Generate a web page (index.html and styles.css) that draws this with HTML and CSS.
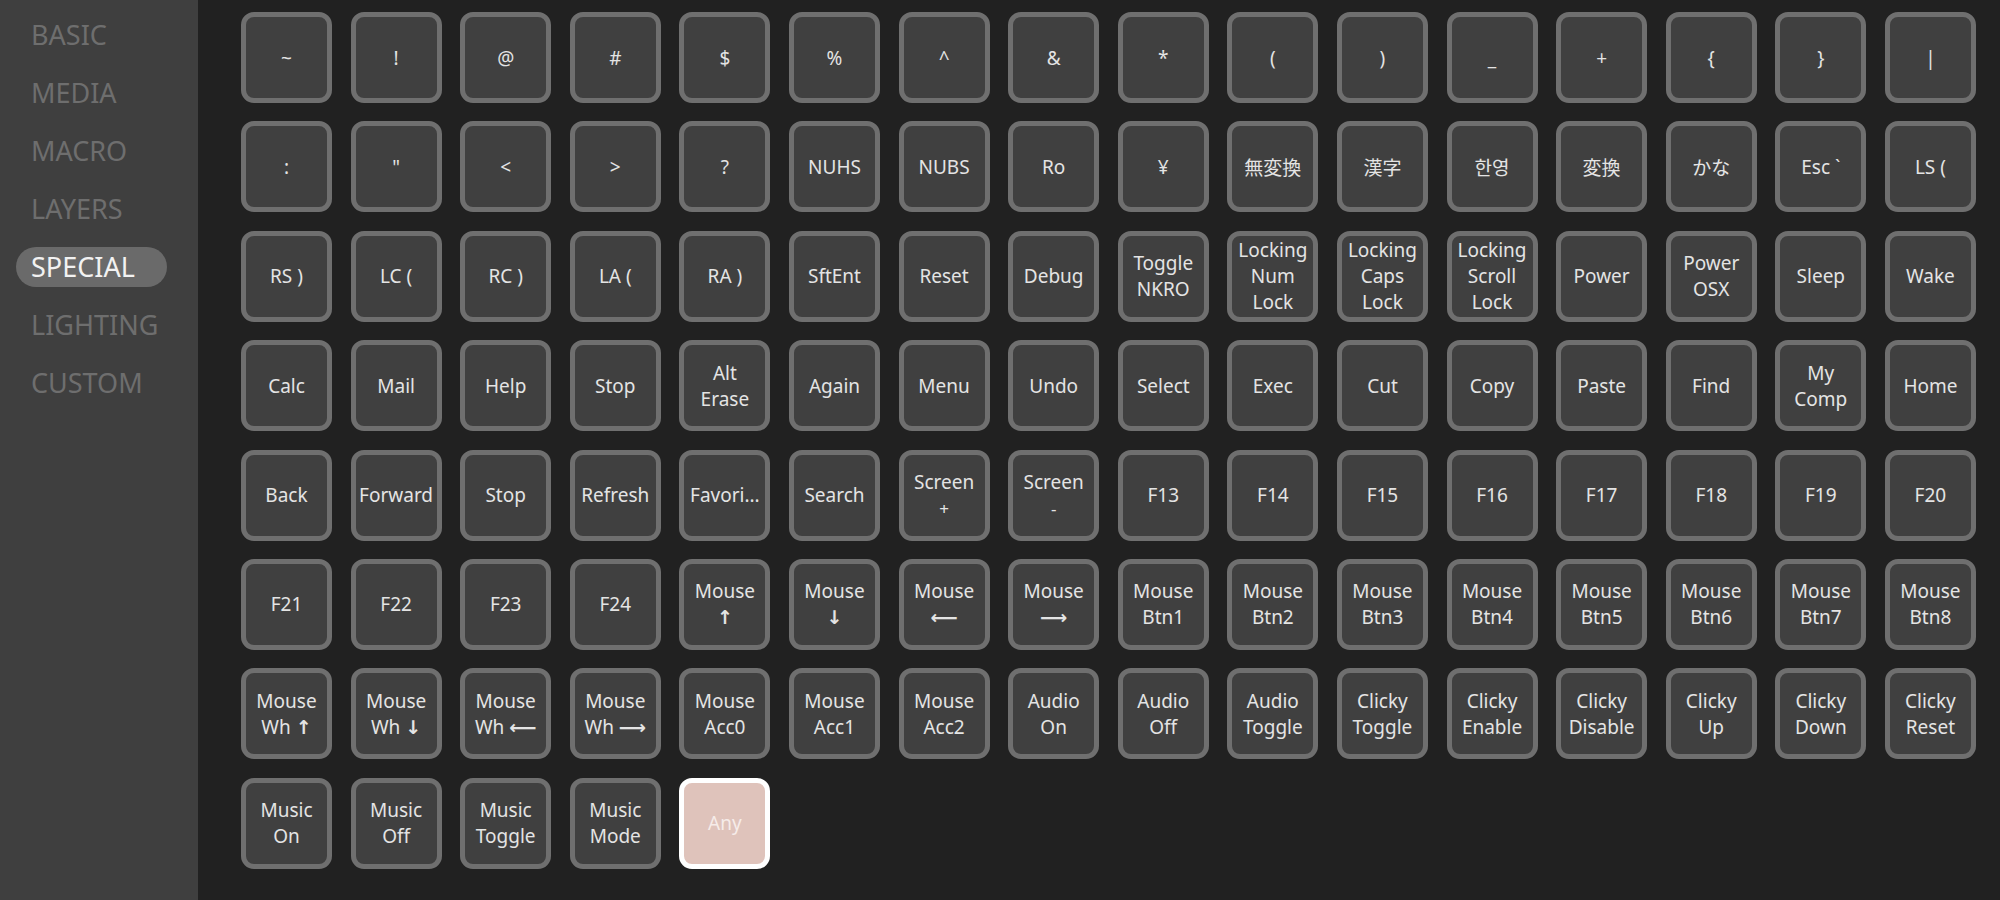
FILE: index.html
```html
<!DOCTYPE html>
<html lang="en">
<head>
    <meta charset="UTF-8">
    <title>Keycodes - Special</title>
    <link rel="stylesheet" href="styles.css">
</head>
<body>
    <div class="app">
        <!-- category menu -->
        <nav class="menu">
            <div class="menu-item">BASIC</div>
            <div class="menu-item">MEDIA</div>
            <div class="menu-item">MACRO</div>
            <div class="menu-item">LAYERS</div>
            <div class="menu-item active">SPECIAL</div>
            <div class="menu-item">LIGHTING</div>
            <div class="menu-item">CUSTOM</div>
        </nav>

        <!-- keycode picker -->
        <main class="keys">
            <div class="key">~</div>
            <div class="key">!</div>
            <div class="key">@</div>
            <div class="key">#</div>
            <div class="key">$</div>
            <div class="key">%</div>
            <div class="key">^</div>
            <div class="key">&amp;</div>
            <div class="key">*</div>
            <div class="key">(</div>
            <div class="key">)</div>
            <div class="key">_</div>
            <div class="key">+</div>
            <div class="key">{</div>
            <div class="key">}</div>
            <div class="key">|</div>

            <div class="key">:</div>
            <div class="key">"</div>
            <div class="key">&lt;</div>
            <div class="key">&gt;</div>
            <div class="key">?</div>
            <div class="key">NUHS</div>
            <div class="key">NUBS</div>
            <div class="key">Ro</div>
            <div class="key">¥</div>
            <div class="key cjk">無変換</div>
            <div class="key cjk">漢字</div>
            <div class="key cjk">한영</div>
            <div class="key cjk">変換</div>
            <div class="key cjk">かな</div>
            <div class="key">Esc `</div>
            <div class="key">LS (</div>

            <div class="key">RS )</div>
            <div class="key">LC (</div>
            <div class="key">RC )</div>
            <div class="key">LA (</div>
            <div class="key">RA )</div>
            <div class="key">SftEnt</div>
            <div class="key">Reset</div>
            <div class="key">Debug</div>
            <div class="key">Toggle<br>NKRO</div>
            <div class="key">Locking<br>Num<br>Lock</div>
            <div class="key">Locking<br>Caps<br>Lock</div>
            <div class="key">Locking<br>Scroll<br>Lock</div>
            <div class="key">Power</div>
            <div class="key">Power<br>OSX</div>
            <div class="key">Sleep</div>
            <div class="key">Wake</div>

            <div class="key">Calc</div>
            <div class="key">Mail</div>
            <div class="key">Help</div>
            <div class="key">Stop</div>
            <div class="key">Alt<br>Erase</div>
            <div class="key">Again</div>
            <div class="key">Menu</div>
            <div class="key">Undo</div>
            <div class="key">Select</div>
            <div class="key">Exec</div>
            <div class="key">Cut</div>
            <div class="key">Copy</div>
            <div class="key">Paste</div>
            <div class="key">Find</div>
            <div class="key">My<br>Comp</div>
            <div class="key">Home</div>

            <div class="key">Back</div>
            <div class="key">Forward</div>
            <div class="key">Stop</div>
            <div class="key">Refresh</div>
            <div class="key">Favori...</div>
            <div class="key">Search</div>
            <div class="key"><span>Screen<br><small>+</small></span></div>
            <div class="key"><span>Screen<br><small>-</small></span></div>
            <div class="key">F13</div>
            <div class="key">F14</div>
            <div class="key">F15</div>
            <div class="key">F16</div>
            <div class="key">F17</div>
            <div class="key">F18</div>
            <div class="key">F19</div>
            <div class="key">F20</div>

            <div class="key">F21</div>
            <div class="key">F22</div>
            <div class="key">F23</div>
            <div class="key">F24</div>
            <div class="key"><span>Mouse<br><i class="arrow">↑</i></span></div>
            <div class="key"><span>Mouse<br><i class="arrow">↓</i></span></div>
            <div class="key"><span>Mouse<br><i class="arrow">⟵</i></span></div>
            <div class="key"><span>Mouse<br><i class="arrow">⟶</i></span></div>
            <div class="key">Mouse<br>Btn1</div>
            <div class="key">Mouse<br>Btn2</div>
            <div class="key">Mouse<br>Btn3</div>
            <div class="key">Mouse<br>Btn4</div>
            <div class="key">Mouse<br>Btn5</div>
            <div class="key">Mouse<br>Btn6</div>
            <div class="key">Mouse<br>Btn7</div>
            <div class="key">Mouse<br>Btn8</div>

            <div class="key"><span>Mouse<br>Wh <i class="arrow">↑</i></span></div>
            <div class="key"><span>Mouse<br>Wh <i class="arrow">↓</i></span></div>
            <div class="key"><span>Mouse<br>Wh <i class="arrow">⟵</i></span></div>
            <div class="key"><span>Mouse<br>Wh <i class="arrow">⟶</i></span></div>
            <div class="key">Mouse<br>Acc0</div>
            <div class="key">Mouse<br>Acc1</div>
            <div class="key">Mouse<br>Acc2</div>
            <div class="key">Audio<br>On</div>
            <div class="key">Audio<br>Off</div>
            <div class="key">Audio<br>Toggle</div>
            <div class="key">Clicky<br>Toggle</div>
            <div class="key">Clicky<br>Enable</div>
            <div class="key">Clicky<br>Disable</div>
            <div class="key">Clicky<br>Up</div>
            <div class="key">Clicky<br>Down</div>
            <div class="key">Clicky<br>Reset</div>

            <div class="key">Music<br>On</div>
            <div class="key">Music<br>Off</div>
            <div class="key">Music<br>Toggle</div>
            <div class="key">Music<br>Mode</div>
            <div class="key selected">Any</div>
        </main>
    </div>
</body>
</html>
```

FILE: styles.css
```css
/* Dark keycode picker */
body {
    margin: 0;
    font-family: 'Noto Sans', 'Open Sans', sans-serif;
    background-color: #212121;
    color: #e2e2e2;
}
.app {
    display: flex;
    height: 900px;
}

/* Left category menu */
.menu {
    width: 198px;
    flex-shrink: 0;
    background-color: #3f3f3f;
    padding-top: 15px;
    box-sizing: border-box;
    display: flex;
    flex-direction: column;
    gap: 18px;
}
.menu-item {
    width: 151px;
    height: 40px;
    margin-left: 16px;
    padding-left: 15px;
    box-sizing: border-box;
    border-radius: 20px;
    font-size: 27px;
    line-height: 40px;
    color: #6e6e6e;
}
.menu-item.active {
    background-color: #6a6a6a;
    color: #f2f2f2;
}

/* Keycode grid */
.keys {
    flex: 1;
    display: grid;
    grid-template-columns: repeat(16, 91px);
    grid-auto-rows: 91px;
    column-gap: 18.6px;
    row-gap: 18.4px;
    padding: 12px 0 0 43px;
    align-content: start;
}
.key {
    box-sizing: border-box;
    border: 5px solid #6f6f6f;
    border-radius: 13px;
    background-color: #404040;
    display: flex;
    align-items: center;
    justify-content: center;
    text-align: center;
    font-size: 19px;
    line-height: 26px;
    color: #e4e4e4;
    overflow: hidden;
    white-space: nowrap;
}
.key small {
    font-size: 17px;
}
.key .arrow {
    font-style: normal;
    font-family: 'DejaVu Sans', sans-serif;
    font-size: 19px;
    font-weight: bold;
}
.key.cjk {
    font-family: 'Noto Sans CJK JP', 'Noto Sans CJK KR', sans-serif;
}
.key.selected {
    background-color: #dfc3bb;
    border-color: #ffffff;
    color: #f6ece9;
}
```
